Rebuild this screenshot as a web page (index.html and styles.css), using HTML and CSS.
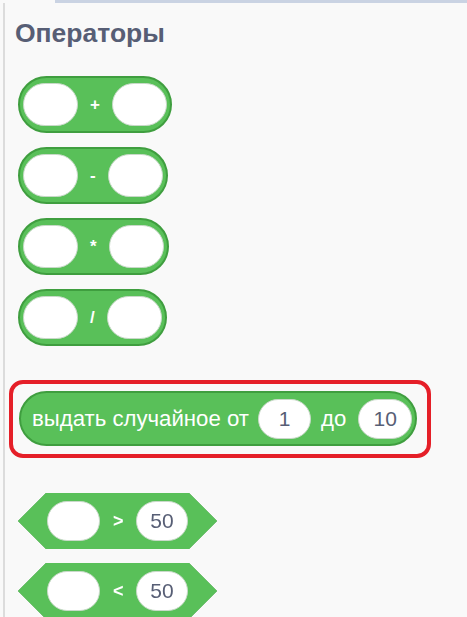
FILE: index.html
```html
<!DOCTYPE html>
<html lang="ru">
<head>
<meta charset="utf-8">
<title>Операторы</title>
<link rel="stylesheet" href="styles.css">
</head>
<body>
<div class="topbar"></div>
<div class="panel">
  <h2 class="title">Операторы</h2>

  <div class="reporter op-plus">
    <span class="slot"></span><span class="op">+</span><span class="slot"></span>
  </div>
  <div class="reporter">
    <span class="slot"></span><span class="op">-</span><span class="slot"></span>
  </div>
  <div class="reporter">
    <span class="slot"></span><span class="op">*</span><span class="slot"></span>
  </div>
  <div class="reporter last">
    <span class="slot"></span><span class="op">/</span><span class="slot"></span>
  </div>

  <div class="highlight">
    <div class="reporter random">
      <span class="label">выдать случайное от</span>
      <span class="slot small">1</span>
      <span class="label mid">до</span>
      <span class="slot small">10</span>
    </div>
  </div>

  <div class="bool">
    <div class="bool-shape">
      <span class="slot hex"></span><span class="op cmp">&gt;</span><span class="slot hex val">50</span>
    </div>
  </div>
  <div class="bool">
    <div class="bool-shape">
      <span class="slot hex"></span><span class="op cmp">&lt;</span><span class="slot hex val">50</span>
    </div>
  </div>
</div>
</body>
</html>
```
FILE: styles.css
```css
html, body {
  margin: 0;
  padding: 0;
}
body {
  background: #f9f9f9;
  font-family: "Liberation Sans", Arial, sans-serif;
  overflow: hidden;
}
.topbar {
  height: 3px;
  margin-left: 55px;
  background: #cad3e3;
}
.panel {
  margin-left: 3px;
  border-left: 2px solid #dcdcdc;
  min-height: 614px;
  box-sizing: border-box;
  padding-top: 15px;
}
.title {
  margin: 0 0 28px 10px;
  font-size: 26.5px;
  line-height: 30px;
  height: 30px;
  font-weight: bold;
  color: #575e75;
}
.reporter {
  display: flex;
  align-items: center;
  width: max-content;
  box-sizing: border-box;
  height: 57px;
  border: 2px solid #3f9e3f;
  border-radius: 29px;
  background: #59c059;
  padding: 0 3px;
  margin: 0 0 14px 13px;
}
.reporter.op-plus .op {
  margin: 0 12px;
}
.reporter.last {
  margin-bottom: 34px;
}
.slot {
  display: flex;
  align-items: center;
  justify-content: center;
  width: 55px;
  height: 43px;
  box-sizing: border-box;
  background: #ffffff;
  border: 1px solid #c9d9c9;
  border-radius: 22px;
  color: #575e75;
  font-size: 21px;
}
.op {
  color: #ffffff;
  font-weight: bold;
  font-size: 17px;
  margin: 0 12px;
}
.highlight {
  width: max-content;
  margin: 0 0 35px 4px;
  border: 4px solid #e51f28;
  border-radius: 14px;
  padding: 7px 10px 8px 6px;
}
.reporter.random {
  height: 55px;
  border-radius: 28px;
  margin: 0;
  padding: 0 3px 0 11px;
}
.label {
  color: #ffffff;
  font-size: 22.2px;
  margin-right: 9px;
}
.label.mid {
  margin: 0 12px 0 10px;
}
.slot.small {
  width: 53px;
  height: 40px;
  border-radius: 20px;
}
.slot.small:last-child {
  width: 54px;
}
.bool {
  width: max-content;
  margin: 0 0 14px 13px;
  filter: drop-shadow(0 0 0.7px #2f8a2f);
}
.bool-shape {
  display: flex;
  align-items: center;
  height: 56px;
  padding: 0 29px;
  background: #59c059;
  clip-path: polygon(28px 0, calc(100% - 28px) 0, 100% 50%, calc(100% - 28px) 100%, 28px 100%, 0 50%);
}
.slot.hex {
  width: 53px;
  height: 40px;
  border-radius: 20px;
}
.slot.hex.val {
  width: 52px;
}
.op.cmp {
  margin: 0 13px;
  font-weight: bold;
  font-size: 18px;
  width: 10px;
  text-align: center;
}
```
